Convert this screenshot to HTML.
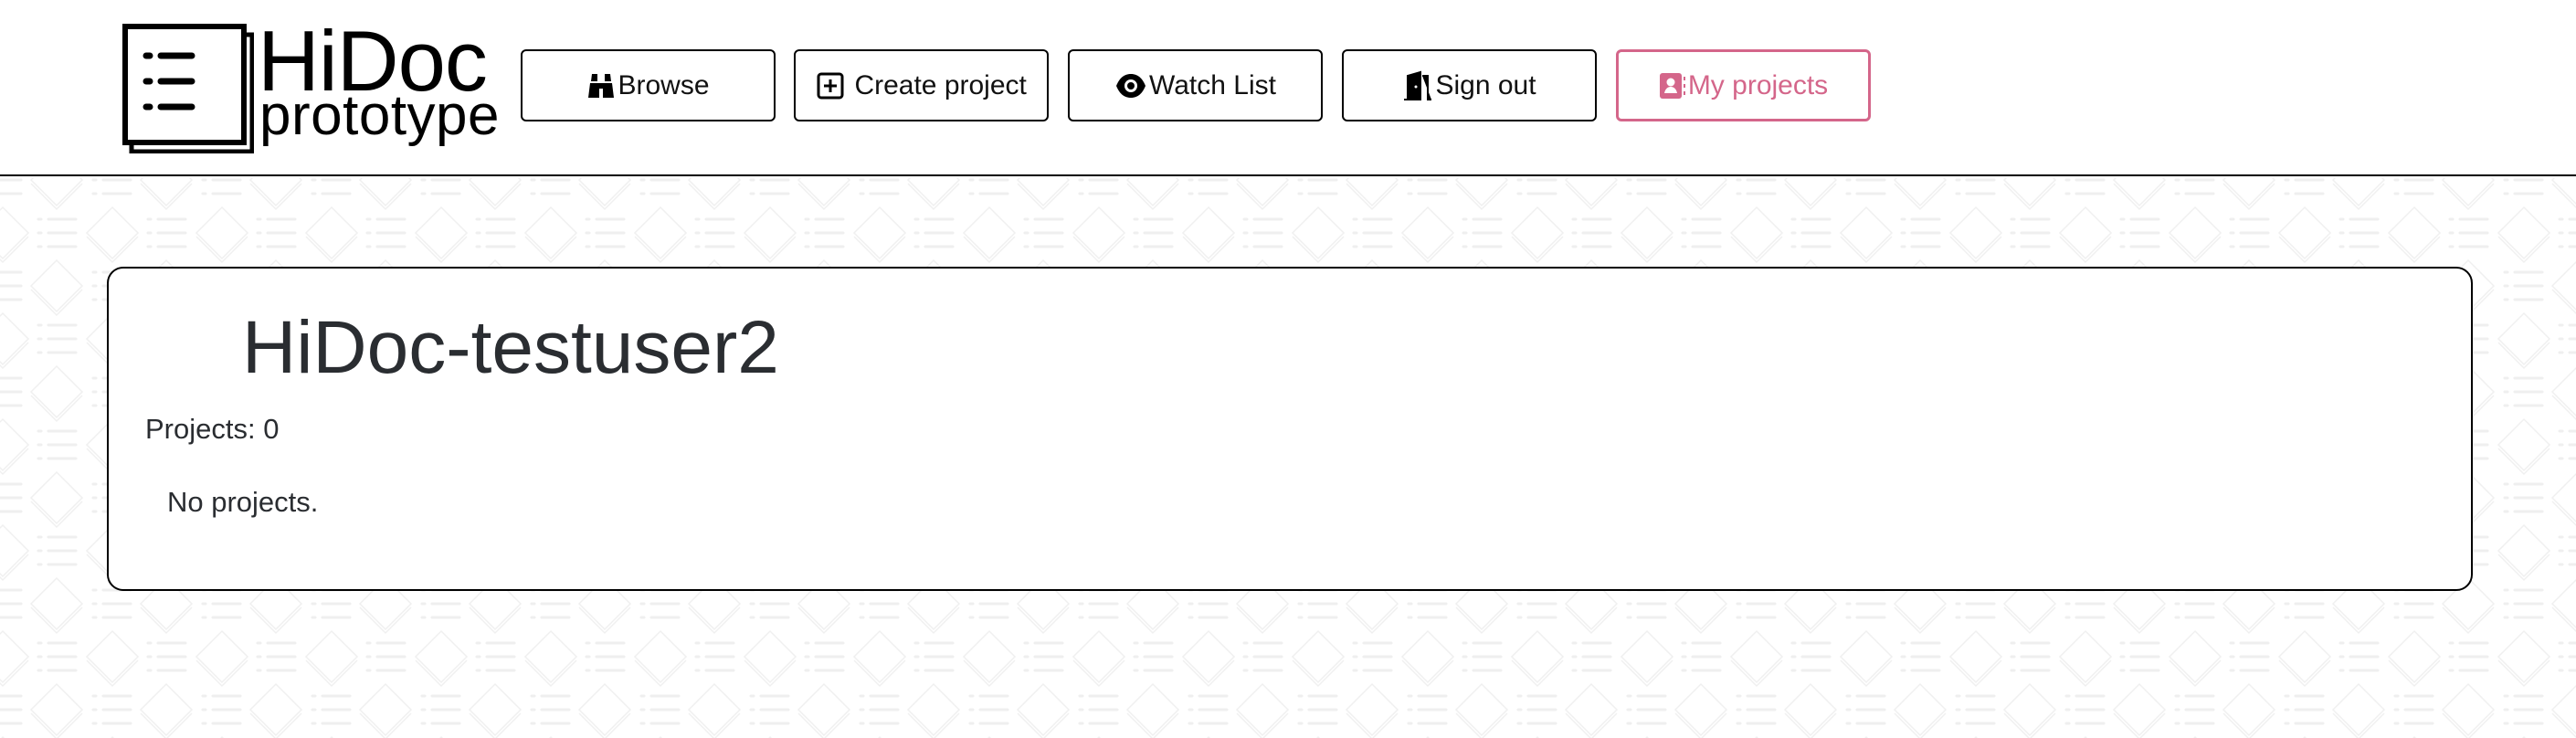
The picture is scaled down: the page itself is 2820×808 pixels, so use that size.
<!DOCTYPE html>
<html><head><meta charset="utf-8">
<style>
*{box-sizing:border-box;margin:0;padding:0}
html,body{width:2820px;height:808px;overflow:hidden;background:#fff;font-family:"Liberation Sans",sans-serif;color:#212529}
#hdr{position:absolute;left:0;top:0;width:2820px;height:193px;background:#fff;border-bottom:2px solid #000}
#bg{position:absolute;left:0;top:195px;width:2820px;height:613px}
.btn{position:absolute;top:54px;width:279px;height:79px;border:2px solid #000;border-radius:6px;display:flex;align-items:center;justify-content:center;font-size:30px;color:#111;font-weight:300}
.btn svg{margin-right:2px}
#card{position:absolute;left:117px;top:292px;width:2590px;height:355px;background:#fff;border:2px solid #000;border-radius:18px}
</style></head><body>
<svg id="bg" width="2820" height="613">
<defs>
<pattern id="p" x="0" y="-8" width="120" height="116" patternUnits="userSpaceOnUse">
<g fill="none" stroke="#f0f0f0" stroke-width="1.5">
<path d="M123 40 l28 28 l-28 28 l-28 -28z M95 72 l28 28 l28 -28"/>
<path d="M3 40 l28 28 l-28 28 l-28 -28z M-25 72 l28 28 l28 -28"/>
<path d="M62 -18 l28 28 l-28 28 l-28 -28z M34 14 l28 28 l28 -28"/>
<path d="M62 98 l28 28 l-28 28 l-28 -28z M34 130 l28 28 l28 -28"/>
</g>
<g stroke="#efefef" stroke-width="3" stroke-linecap="round">
<path d="M42 53h3M53 53h30M42 68h3M53 68h30M42 83h3M53 83h30"/>
<path d="M102 -5h3M113 -5h30M102 10h3M113 10h30M102 25h3M113 25h30"/>
<path d="M-18 -5h3M-7 -5h30M-18 10h3M-7 10h30M-18 25h3M-7 25h30"/>
<path d="M102 111h3M113 111h30M-18 111h3M-7 111h30"/>
</g>
</pattern></defs>
<rect width="2820" height="613" fill="url(#p)"/>
</svg>
<div id="hdr">
<svg style="position:absolute;left:134px;top:26px" width="144" height="142" viewBox="0 0 144 142">
<rect x="10" y="12" width="132" height="128" fill="#fff" stroke="#000" stroke-width="5"/>
<rect x="3" y="3" width="130" height="127" fill="#fff" stroke="#000" stroke-width="6"/>
<g stroke="#000" stroke-width="7" stroke-linecap="round"><path d="M26 35h4M42 35h34M26 63h4M42 63h34M26 91h4M42 91h34"/></g>
</svg>
<div style="position:absolute;left:282px;top:17px;font-size:94px;line-height:100px;color:#000;letter-spacing:-1px">HiDoc</div>
<div style="position:absolute;left:284px;top:95px;font-size:62px;line-height:64px;color:#000;letter-spacing:0.5px">prototype</div>
<div class="btn" style="left:570px"><svg width="32" height="30" viewBox="0 0 32 30"><path d="M2 28l2-16h10v16zM18 28V12h10l2 16zM5 10l1-8h6v8zM20 10V2h6l1 8zM13 12h6v6h-6z" fill="#000"/></svg>Browse</div>
<div class="btn" style="left:869px"><svg width="32" height="32" viewBox="0 0 32 32"><rect x="3" y="3" width="26" height="26" rx="3" fill="none" stroke="#000" stroke-width="3"/><path d="M16 9v14M9 16h14" stroke="#000" stroke-width="3"/></svg>&nbsp;Create project</div>
<div class="btn" style="left:1169px"><svg width="36" height="30" viewBox="0 0 36 30"><path d="M2 15C6 5 12 2 18 2s12 3 16 13c-4 10-10 13-16 13S6 25 2 15z" fill="#000"/><circle cx="18" cy="15" r="7" fill="#fff"/><circle cx="18" cy="15" r="4" fill="#000"/></svg>Watch List</div>
<div class="btn" style="left:1469px"><svg width="34" height="34" viewBox="0 0 34 34"><path d="M2 32h4V6l14-4v30h-4zM22 6h6v26h4" fill="#000" stroke="#000" stroke-width="2"/><circle cx="15" cy="18" r="1.5" fill="#fff"/></svg>Sign out</div>
<div class="btn" style="left:1769px;border:3px solid #d4668a;color:#d4668a"><svg width="30" height="32" viewBox="0 0 30 32"><rect x="1" y="2" width="24" height="28" rx="3" fill="#d4668a"/><circle cx="13" cy="12" r="4.5" fill="#fff"/><path d="M6 24c1-5 4-7 7-7s6 2 7 7z" fill="#fff"/><path d="M28 6v4M28 14v4M28 22v4" stroke="#d4668a" stroke-width="2"/></svg>My projects</div>
</div>
<div id="card">
<div style="position:absolute;left:146px;top:42px;font-size:82px;line-height:90px;font-weight:300;color:#2a2d31">HiDoc-testuser2</div>
<div style="position:absolute;left:40px;top:156px;font-size:31px;line-height:40px;font-weight:300;color:#2a2d31">Projects: 0</div>
<div style="position:absolute;left:64px;top:236px;font-size:31px;line-height:40px;font-weight:300;color:#2a2d31">No projects.</div>
</div>
</body></html>
